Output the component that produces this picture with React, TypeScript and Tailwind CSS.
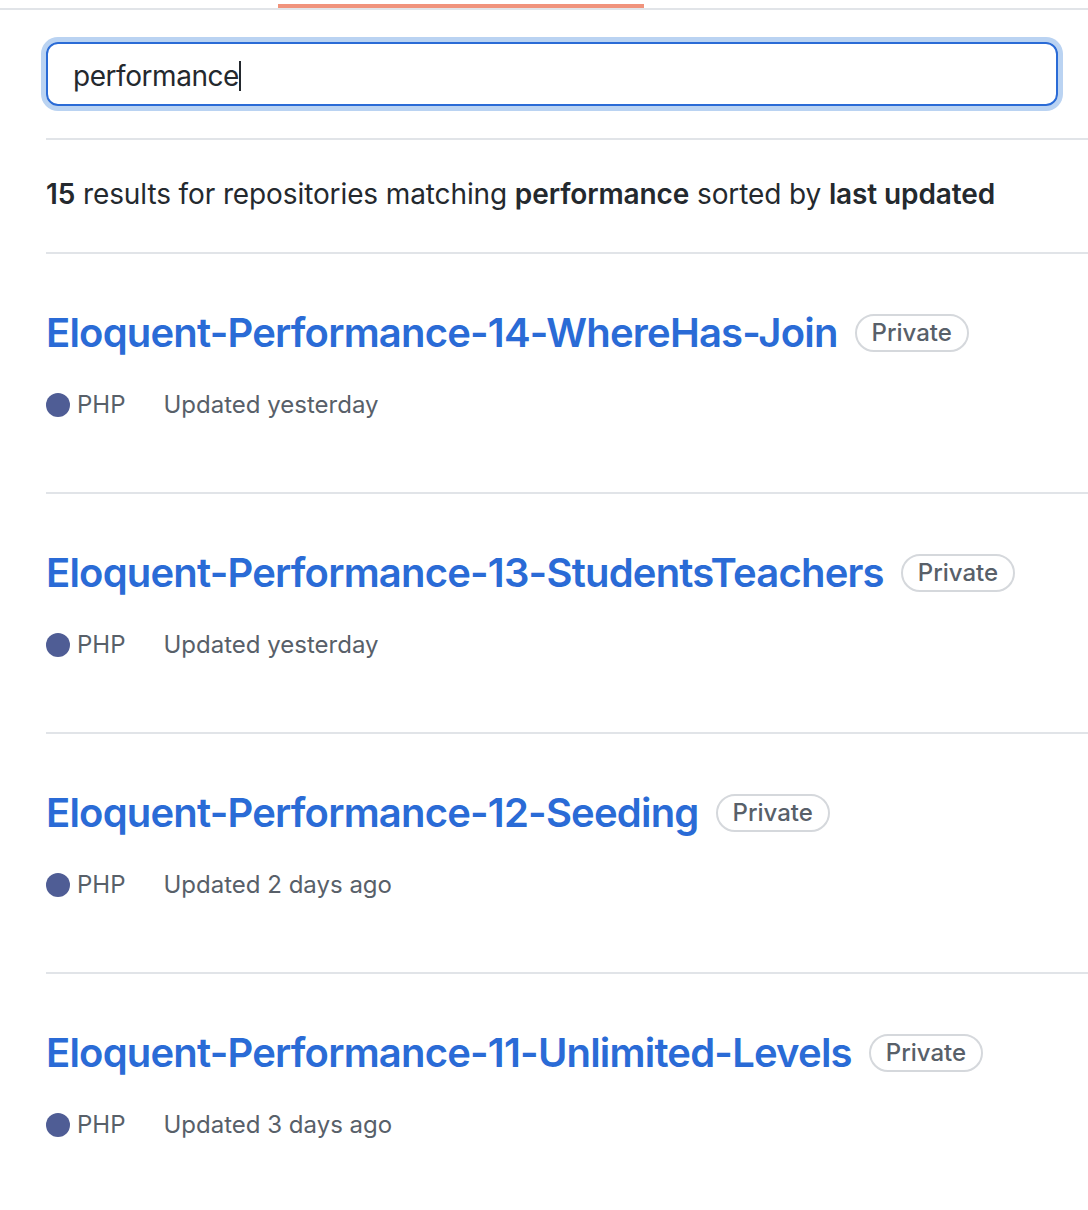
import React from "react";

type Repo = {
  name: string;
  updated: string;
};

const repos: Repo[] = [
  { name: "Eloquent-Performance-14-WhereHas-Join", updated: "Updated yesterday" },
  { name: "Eloquent-Performance-13-StudentsTeachers", updated: "Updated yesterday" },
  { name: "Eloquent-Performance-12-Seeding", updated: "Updated 2 days ago" },
  { name: "Eloquent-Performance-11-Unlimited-Levels", updated: "Updated 3 days ago" },
];

const RepoItem = ({ repo }: { repo: Repo }) => {
  return (
    <li className="border-b-2 border-[#e1e4e8] pt-[54px] pb-[69px]">
      <div className="flex items-center">
        <a className="text-[40px] leading-[50px] font-semibold text-[#2a6bd6] tracking-[-0.8px]">
          {repo.name}
        </a>
        <span className="ml-[17px] h-[38px] px-[15px] flex items-center rounded-full border-2 border-[#d5d8dc] text-[24px] font-medium text-[#586069]">
          Private
        </span>
      </div>
      <div className="mt-[29px] flex items-center h-[36px] text-[24px] text-[#586069]">
        <span className="flex items-center mr-[38px]">
          <span className="w-[24px] h-[24px] rounded-full bg-[#4F5D95] mr-[7px]" />
          PHP
        </span>
        <span>{repo.updated}</span>
      </div>
    </li>
  );
};

const App = () => {
  return (
    <div className="w-[1088px] h-[1210px] overflow-hidden bg-white font-['Inter',sans-serif] text-[#24292e]">
      {/* tab underline */}
      <div className="pt-[4px] border-b-2 border-[#e1e4e8]">
        <div className="ml-[278px] w-[366px] h-[4px] bg-[#f0937c]" />
      </div>

      <div className="pl-[46px]">
        <div className="mt-[32px] mr-[30px] h-[64px] rounded-[12px] border-2 border-[#2a6bd6] ring-[5px] ring-[#bad3f2] flex items-center pl-[25px] pt-[3px] text-[28px] tracking-[-0.45px]">
          <span>performance</span>
          <span className="w-[2px] h-[30px] bg-[#24292e]" />
        </div>

        <div className="mt-[32px] border-t-2 border-b-2 border-[#e1e4e8] pt-[33px] pb-[37px] text-[28px] leading-[42px] tracking-[-0.11px]">
          <span className="font-semibold">15</span> results for repositories matching{" "}
          <span className="font-semibold">performance</span> sorted by{" "}
          <span className="font-semibold">last updated</span>
        </div>

        <ul>
          {repos.map((repo) => (
            <RepoItem key={repo.name} repo={repo} />
          ))}
        </ul>
      </div>
    </div>
  );
};

export default App;
